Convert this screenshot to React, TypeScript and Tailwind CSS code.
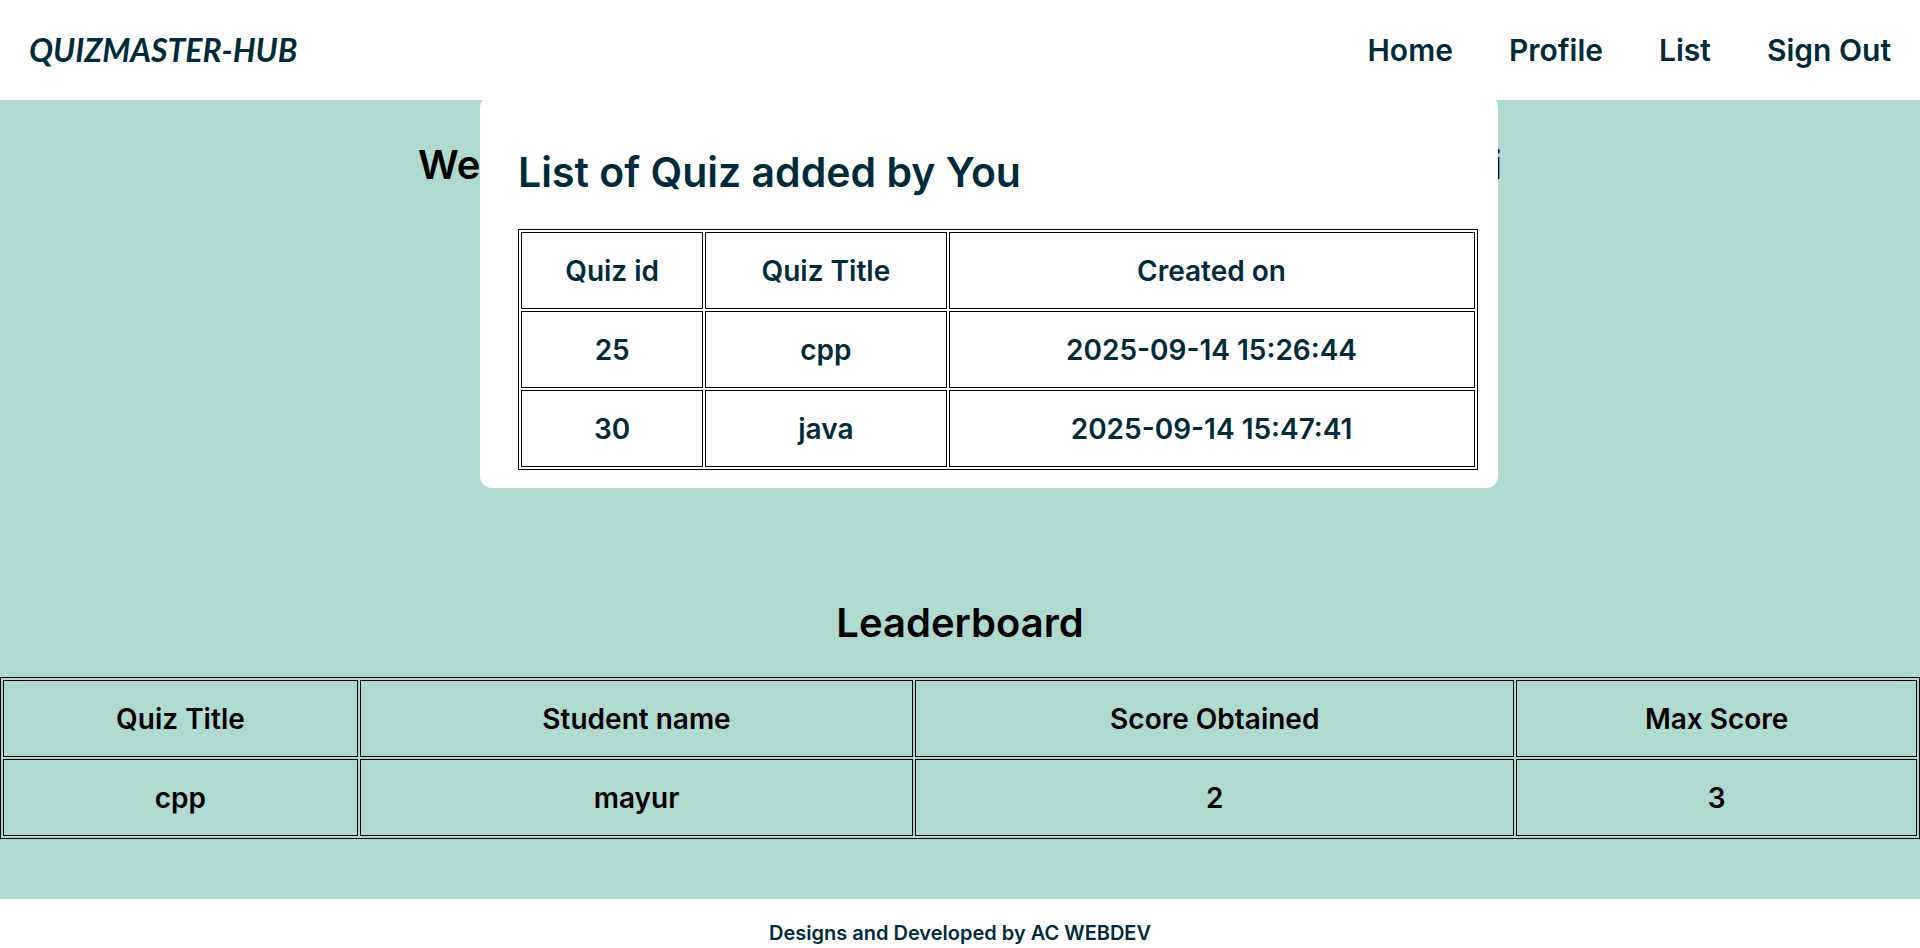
const navLinks = ['Home', 'Profile', 'List', 'Sign Out'];

type GridTableProps = {
  label: string;
  columns: { title: string; width: string }[];
  rows: string[][];
};

function GridTable({ label, columns, rows }: GridTableProps) {
  return (
    <table
      aria-label={label}
      className="w-full table-fixed border-separate border-spacing-[2px] border border-black text-center text-[28px] leading-9 font-semibold"
    >
      <thead>
        <tr>
          {columns.map((column) => (
            <th key={column.title} scope="col" className={`h-[77px] border border-black font-semibold ${column.width}`}>
              {column.title}
            </th>
          ))}
        </tr>
      </thead>
      <tbody>
        {rows.map((row) => (
          <tr key={row.join()}>
            {row.map((cell) => (
              <td key={cell} className="h-[77px] border border-black">
                {cell}
              </td>
            ))}
          </tr>
        ))}
      </tbody>
    </table>
  );
}

const quizColumns = [
  { title: 'Quiz id', width: 'w-[19.2%]' },
  { title: 'Quiz Title', width: 'w-[25.4%]' },
  { title: 'Created on', width: 'w-[55.4%]' },
];

const quizRows = [
  ['25', 'cpp', '2025-09-14 15:26:44'],
  ['30', 'java', '2025-09-14 15:47:41'],
];

const leaderColumns = [
  { title: 'Quiz Title', width: 'w-[18.6%]' },
  { title: 'Student name', width: 'w-[29%]' },
  { title: 'Score Obtained', width: 'w-[31.4%]' },
  { title: 'Max Score', width: 'w-[21%]' },
];

const leaderRows = [['cpp', 'mayur', '2', '3']];

export default function App() {
  return (
    <div className="relative flex min-h-screen flex-col bg-[#b0dad0] font-['Inter',sans-serif] text-black">
      <header className="flex h-[100px] items-center justify-between bg-white px-[29px] text-[#022b3a]">
        <a href="#" className="font-['Lato',sans-serif] text-[32px] leading-10 font-bold italic">
          QUIZMASTER-HUB
        </a>
        <nav className="flex gap-14 text-[30px] leading-10 font-semibold">
          {navLinks.map((link) => (
            <a key={link} href="#">
              {link}
            </a>
          ))}
        </nav>
      </header>

      <main className="flex grow flex-col justify-between pt-[35px] pb-15">
        <h1 className="mx-auto flex w-[1084px] max-w-full justify-between text-[40px] leading-[60px] font-semibold">
          <span>We</span>
          <span>i</span>
        </h1>
        <section>
          <h2 className="mb-6 text-center text-[40px] leading-[60px] font-semibold">Leaderboard</h2>
          <GridTable label="Leaderboard" columns={leaderColumns} rows={leaderRows} />
        </section>
      </main>

      <footer className="bg-white pt-6 pb-[5px] text-center text-[20px] leading-5 font-semibold text-[#022b3a]">
        Designs and Developed by AC WEBDEV
      </footer>

      <section className="absolute top-24 left-1/4 w-[53%] rounded-xl bg-white pt-[46px] pr-5 pb-[18px] pl-[38px] text-[#022b3a]">
        <h2 className="mb-[27px] text-[41px] leading-[60px] font-semibold">List of Quiz added by You</h2>
        <GridTable label="List of Quiz added by You" columns={quizColumns} rows={quizRows} />
      </section>
    </div>
  );
}
